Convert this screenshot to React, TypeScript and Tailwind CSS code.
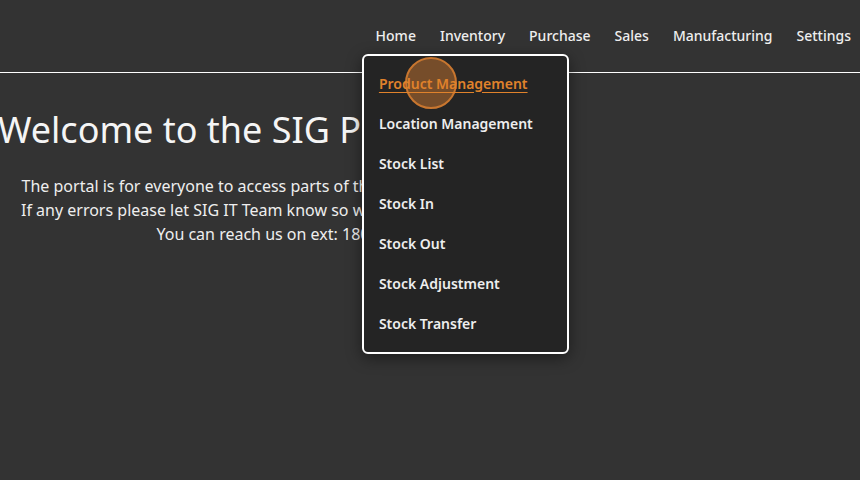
import React from 'react'

const navItems = ['Home', 'Inventory', 'Purchase', 'Sales', 'Manufacturing', 'Settings']

const inventoryItems = [
  'Product Management',
  'Location Management',
  'Stock List',
  'Stock In',
  'Stock Out',
  'Stock Adjustment',
  'Stock Transfer',
]

export default function App() {
  return (
    <div
      className="relative min-h-[480px] w-full overflow-hidden bg-[#333333] text-[#f2f2f2]"
      style={{ fontFamily: '"Noto Sans", "Open Sans", sans-serif' }}
    >
      {/* Top bar */}
      <header className="h-[73px] border-b border-white">
        <nav className="flex h-full items-center justify-end gap-[24px] pr-[9px] pb-[2px]">
          {navItems.map((item) => (
            <div key={item} className="relative">
              <span className="text-[14px] font-medium text-[#eeeeee]">{item}</span>
              {item === 'Inventory' && <InventoryMenu />}
            </div>
          ))}
        </nav>
      </header>

      {/* Welcome */}
      <main className="pt-[33px]">
        <h1 className="ml-[-2px] whitespace-nowrap text-[36px] leading-[48px] text-[#f5f5f5]">
          Welcome to the SIG Portal
        </h1>
        <div className="ml-[21px] mt-[20px] w-fit whitespace-nowrap text-center text-[16px] leading-[24px] text-[#eeeeee]">
          <p>The portal is for everyone to access parts of the system they need</p>
          <p>If any errors please let SIG IT Team know so we can fix them ASAP</p>
          <p>You can reach us on ext: 1800</p>
        </div>
      </main>
    </div>
  )
}

function InventoryMenu() {
  return (
    <div className="absolute left-[-78px] top-[31px] z-10 w-[207px] rounded-[6px] border-2 border-white bg-[#242424] pt-[7px] pb-[9px] shadow-[0_4px_16px_rgba(0,0,0,0.45)]">
      {inventoryItems.map((item, i) => (
        <div key={item} className="relative flex h-[40px] items-center px-[15px]">
          {i === 0 && (
            <span className="absolute left-[41px] top-[-6px] h-[52px] w-[52px] rounded-full border-2 border-[#c8762f] bg-[#c8762f]/50" />
          )}
          <span
            className={
              i === 0
                ? 'relative whitespace-nowrap text-[14px] font-semibold text-[#e0822b] underline underline-offset-[3px]'
                : 'whitespace-nowrap text-[14px] font-semibold text-[#eeeeee]'
            }
          >
            {item}
          </span>
        </div>
      ))}
    </div>
  )
}
